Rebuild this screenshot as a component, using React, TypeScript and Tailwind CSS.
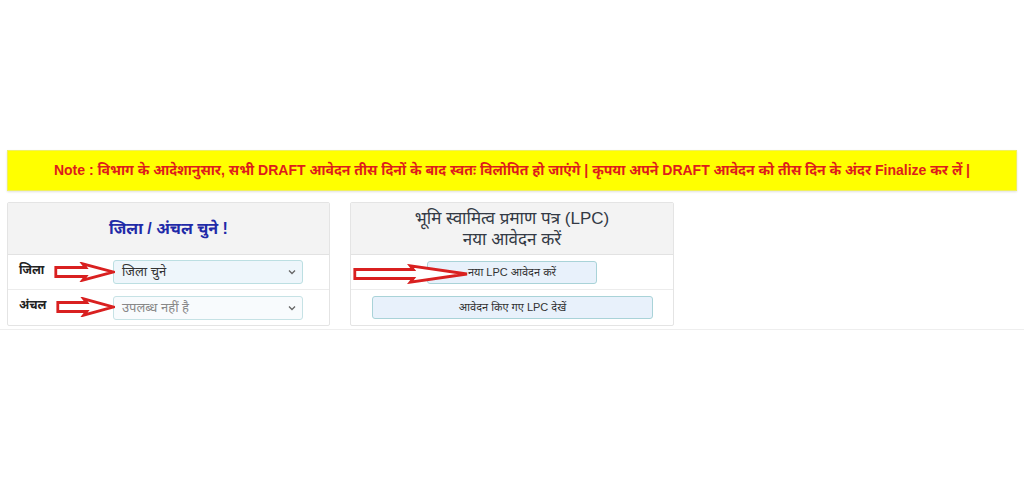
import React from 'react';

const font = { fontFamily: '"Liberation Sans", "Noto Sans", Arial, sans-serif' };

const Arrow: React.FC<{ w: number; className: string }> = ({ w, className }) => {
  const head = w * 0.48;
  return (
    <svg width={w} height={20} viewBox={`0 0 ${w} 20`} className={className}>
      <polygon
        points={`1.8,5.5 ${w - head},5.5 ${w - head - 3},1.8 ${w - 2},10 ${w - head - 3},18.2 ${w - head},14.5 1.8,14.5`}
        fill="white"
        stroke="#d92020"
        strokeWidth="2.8"
        strokeLinejoin="miter"
      />
    </svg>
  );
};

const Chevron = () => (
  <svg width="8" height="6" viewBox="0 0 8 6" className="shrink-0">
    <path d="M1 1.5 L4 4.5 L7 1.5" fill="none" stroke="#666" strokeWidth="1.3" />
  </svg>
);

const App: React.FC = () => {
  return (
    <div className="w-[1024px] h-[480px] bg-white" style={font}>
      <div className="pt-[150px] px-[7px]">
        <div className="h-[41px] bg-[#ffff00] flex items-center justify-center shadow-[0_1px_2px_rgba(0,0,0,0.12)] border border-[#f0f060]">
          <p className="text-[#dd1c1c] font-bold text-[14px]">
            Note : विभाग के आदेशानुसार, सभी DRAFT आवेदन तीस दिनों के बाद स्वतः विलोपित हो जाएंगे | कृपया अपने DRAFT आवेदन को तीस दिन के अंदर Finalize कर लें |
          </p>
        </div>
      </div>

      <div className="mt-[11px] pb-[3px] border-b border-[#eeeeee]">
        <div className="flex gap-[20px] px-[7px]">
          {/* district / circle selection */}
          <div className="relative w-[323px] border border-[#e4e4e4] rounded-[2px]">
            <div className="h-[52px] bg-[#f3f3f3] border-b border-[#e2e2e2] flex items-center justify-center">
              <h2 className="text-[#1f2aa8] font-bold text-[16px]">जिला / अंचल चुने !</h2>
            </div>
            <div className="h-[35px] flex items-center border-b border-[#ececec]">
              <span className="w-[105px] pl-[11px] text-[12px] font-bold text-[#222] self-start pt-[6px]">जिला</span>
              <div className="w-[190px] h-[24px] bg-[#eef6fb] border border-[#bcdfe2] rounded-[3px] flex items-center justify-between pl-[8px] pr-[6px]">
                <span className="text-[13px] text-[#333]">जिला चुने</span>
                <Chevron />
              </div>
            </div>
            <div className="h-[35px] flex items-center">
              <span className="w-[105px] pl-[11px] text-[12px] font-bold text-[#222] self-start pt-[6px]">अंचल</span>
              <div className="w-[190px] h-[24px] bg-[#f8fbfd] border border-[#c6e2e5] rounded-[3px] flex items-center justify-between pl-[8px] pr-[6px]">
                <span className="text-[13px] text-[#888]">उपलब्ध नहीं है</span>
                <Chevron />
              </div>
            </div>
            <Arrow w={61} className="absolute left-[46px] top-[59px]" />
            <Arrow w={59} className="absolute left-[48px] top-[94px]" />
          </div>

          {/* LPC application */}
          <div className="relative w-[324px] border border-[#e4e4e4] rounded-[2px]">
            <div className="h-[52px] bg-[#f3f3f3] border-b border-[#e2e2e2] flex flex-col items-center justify-center">
              <h2 className="text-[#333a45] text-[17px] leading-[21px] text-center">
                भूमि स्वामित्व प्रमाण पत्र (LPC)
                <br />
                नया आवेदन करें
              </h2>
            </div>
            <div className="h-[35px] flex items-center border-b border-[#ececec] pl-[76px]">
              <button className="w-[170px] h-[23px] bg-[#e8f1fb] border border-[#a9d3d8] rounded-[3px] text-[11px] text-[#333]">
                नया LPC आवेदन करें
              </button>
            </div>
            <div className="h-[35px] flex items-center pl-[21px]">
              <button className="w-[281px] h-[23px] bg-[#e8f1fb] border border-[#a9d3d8] rounded-[3px] text-[11px] text-[#333]">
                आवेदन किए गए LPC देखें
              </button>
            </div>
            <Arrow w={116} className="absolute left-[2px] top-[61px]" />
          </div>
        </div>
      </div>
    </div>
  );
};

export default App;
